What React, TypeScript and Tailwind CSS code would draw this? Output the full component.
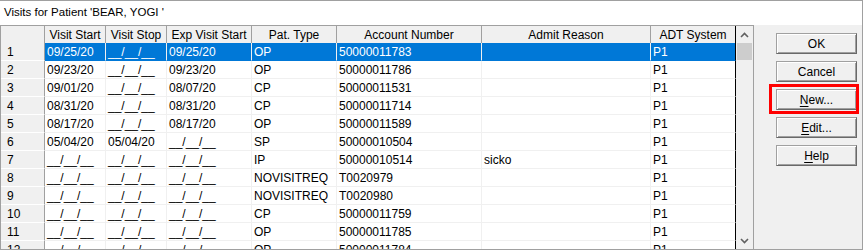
const E = "__/__/__";

const rows: string[][] = [
  ["1", "09/25/20", E, "09/25/20", "OP", "50000011783", "", "P1"],
  ["2", "09/23/20", E, "09/23/20", "OP", "50000011786", "", "P1"],
  ["3", "09/01/20", E, "08/07/20", "CP", "50000011531", "", "P1"],
  ["4", "08/31/20", E, "08/31/20", "CP", "50000011714", "", "P1"],
  ["5", "08/17/20", E, "08/17/20", "OP", "50000011589", "", "P1"],
  ["6", "05/04/20", "05/04/20", E, "SP", "50000010504", "", "P1"],
  ["7", E, E, E, "IP", "50000010514", "sicko", "P1"],
  ["8", E, E, E, "NOVISITREQ", "T0020979", "", "P1"],
  ["9", E, E, E, "NOVISITREQ", "T0020980", "", "P1"],
  ["10", E, E, E, "CP", "50000011759", "", "P1"],
  ["11", E, E, E, "OP", "50000011785", "", "P1"],
  ["12", E, E, E, "OP", "50000011784", "", "P1"],
];

const headers = ["Visit Start", "Visit Stop", "Exp Visit Start", "Pat. Type", "Account Number", "Admit Reason", "ADT System"];
const widths = ["w-[61px]", "w-[61px]", "w-[85px]", "w-[85px]", "w-[145px]", "w-[169px]", "w-[85px]"];

const Chevron = ({ down }: { down?: boolean }) => (
  <svg width="9" height="6" viewBox="0 0 9 6">
    <polyline
      points={down ? "1,1 4.5,4.5 8,1" : "1,5 4.5,1.5 8,5"}
      fill="none"
      stroke="#606060"
      strokeWidth="1.6"
    />
  </svg>
);

const Btn = ({ children, boxed }: { children: React.ReactNode; boxed?: boolean }) => (
  <div className="relative w-[81px] h-[21px]">
    <div className="w-full h-full flex items-center justify-center bg-[#f0f0f0] border border-[#a0a0a0] border-r-[#696969] border-b-[#696969] shadow-[inset_1px_1px_0_#ffffff,inset_-1px_-1px_0_#a0a0a0] text-[12px] text-black">
      {children}
    </div>
    {boxed && (
      <div className="absolute -left-[7px] -top-[5px] -right-[2px] -bottom-[4px] border-[3px] border-[#ff0000]" />
    )}
  </div>
);

export default function App() {
  return (
    <div className="w-[863px] h-[250px] flex flex-col bg-white border-t border-r border-b border-[#a0a0a0] font-['Liberation_Sans',Arial,sans-serif] text-black">
      <div className="h-[24px] flex items-center pl-[4px] text-[11.5px]">Visits for Patient 'BEAR, YOGI '</div>
      <div className="flex h-[224px]">
        <div className="flex w-[754px] border-t border-l border-r border-[#a0a0a0] overflow-hidden">
          <div className="w-[735px] flex flex-col">
            <div className="flex h-[17px] shrink-0 bg-[#f0f0f0] text-[12px]">
              <div className="w-[44px] border-r border-[#a0a0a0]" />
              {headers.map((h, i) => (
                <div
                  key={h}
                  className={`${widths[i]} flex items-center justify-center ${i === 6 ? "border-r border-black" : "border-r border-[#a0a0a0]"}`}
                >
                  {h}
                </div>
              ))}
            </div>
            {rows.map((r, ri) => {
              const sel = ri === 0;
              return (
                <div key={ri} className="flex h-[18px] shrink-0 text-[12px]">
                  <div className="w-[44px] flex items-center pl-[6px] bg-[#f0f0f0] border-r border-b border-r-[#a0a0a0] border-b-white">
                    {r[0]}
                  </div>
                  {r.slice(1).map((c, ci) => (
                    <div
                      key={ci}
                      className={`${widths[ci]} flex items-center pl-[2px] whitespace-nowrap overflow-hidden border-b ${
                        sel ? "bg-[#0078d7] text-white border-b-[#0078d7]" : "border-b-[#f0f0f0]"
                      } ${ci === 6 ? "border-r border-r-black" : "border-r border-r-[#f0f0f0]"}`}
                    >
                      {c}
                    </div>
                  ))}
                </div>
              );
            })}
          </div>
          <div className="w-[17px] flex flex-col bg-[#f0f0f0]">
            <div className="h-[17px] flex items-center justify-center">
              <Chevron />
            </div>
            <div className="h-[17px] mx-[1px] bg-[#cdcdcd]" />
            <div className="flex-1" />
            <div className="h-[17px] flex items-center justify-center">
              <Chevron down />
            </div>
          </div>
        </div>
        <div className="flex-1 bg-[#f0f0f0] pl-[22px] pt-[8px] flex flex-col gap-[7px]">
          <Btn>OK</Btn>
          <Btn>Cancel</Btn>
          <Btn boxed>
            <span>
              <span className="underline underline-offset-2">N</span>ew...
            </span>
          </Btn>
          <Btn>
            <span>
              <span className="underline underline-offset-2">E</span>dit...
            </span>
          </Btn>
          <Btn>
            <span>
              <span className="underline underline-offset-2">H</span>elp
            </span>
          </Btn>
        </div>
      </div>
    </div>
  );
}
